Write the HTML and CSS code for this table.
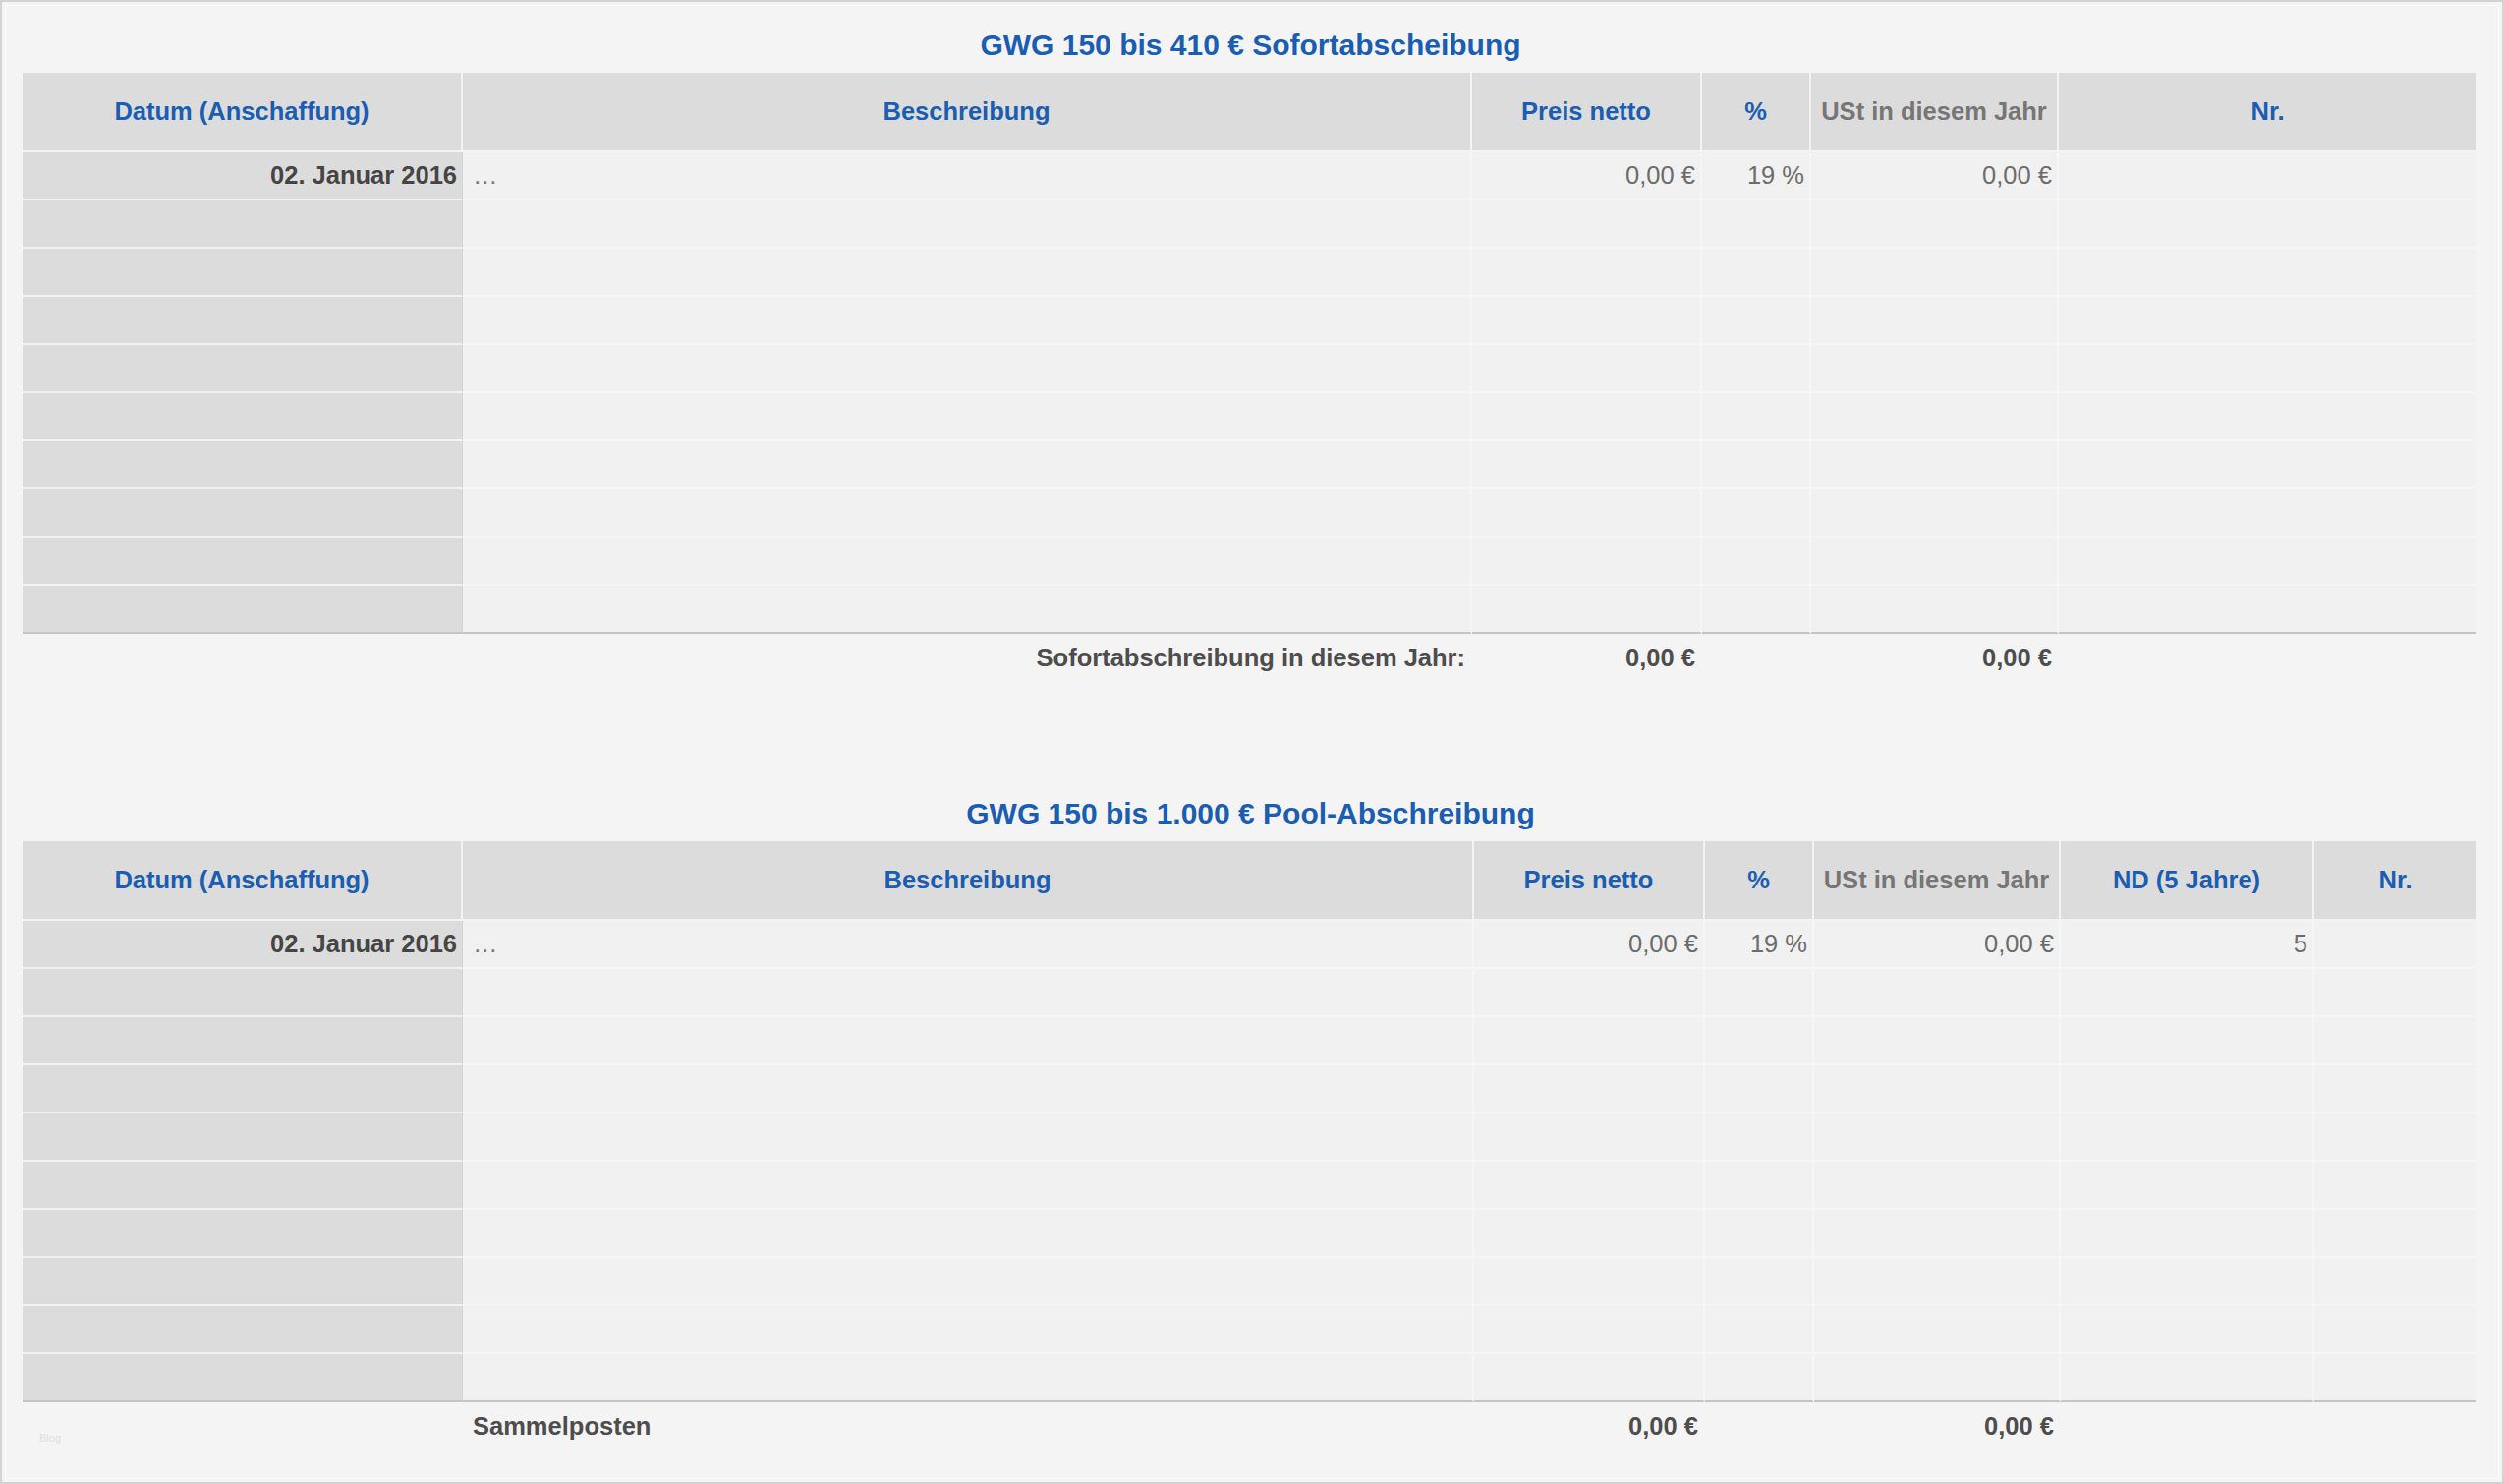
FILE: index.html
```html
<!DOCTYPE html>
<html lang="de">
<head>
<meta charset="utf-8">
<title>GWG</title>
<link rel="stylesheet" href="styles.css">
</head>
<body>
<div class="page">
  <section class="block first">
    <h1 class="title">GWG 150 bis 410 € Sofortabscheibung</h1>
    <div class="tbl t1">
      <div class="row head">
        <div class="blue">Datum (Anschaffung)</div>
        <div class="blue">Beschreibung</div>
        <div class="blue">Preis netto</div>
        <div class="blue">%</div>
        <div class="gray">USt in diesem Jahr</div>
        <div class="blue">Nr.</div>
      </div>
      <div class="rows">
        <div class="row"><div class="date">02. Januar 2016</div><div class="desc">…</div><div class="num">0,00 €</div><div class="num">19 %</div><div class="num">0,00 €</div><div></div></div>
        <div class="row"><div class="date"></div><div></div><div></div><div></div><div></div><div></div></div>
        <div class="row"><div class="date"></div><div></div><div></div><div></div><div></div><div></div></div>
        <div class="row"><div class="date"></div><div></div><div></div><div></div><div></div><div></div></div>
        <div class="row"><div class="date"></div><div></div><div></div><div></div><div></div><div></div></div>
        <div class="row"><div class="date"></div><div></div><div></div><div></div><div></div><div></div></div>
        <div class="row"><div class="date"></div><div></div><div></div><div></div><div></div><div></div></div>
        <div class="row"><div class="date"></div><div></div><div></div><div></div><div></div><div></div></div>
        <div class="row"><div class="date"></div><div></div><div></div><div></div><div></div><div></div></div>
        <div class="row"><div class="date"></div><div></div><div></div><div></div><div></div><div></div></div>
      </div>
      <div class="row foot">
        <div></div>
        <div class="right">Sofortabschreibung in diesem Jahr:</div>
        <div class="right">0,00 €</div>
        <div></div>
        <div class="right">0,00 €</div>
        <div></div>
      </div>
    </div>
  </section>

  <section class="block second">
    <h1 class="title">GWG 150 bis 1.000 € Pool-Abschreibung</h1>
    <div class="tbl t2">
      <div class="row head">
        <div class="blue">Datum (Anschaffung)</div>
        <div class="blue">Beschreibung</div>
        <div class="blue">Preis netto</div>
        <div class="blue">%</div>
        <div class="gray">USt in diesem Jahr</div>
        <div class="blue">ND (5 Jahre)</div>
        <div class="blue">Nr.</div>
      </div>
      <div class="rows">
        <div class="row"><div class="date">02. Januar 2016</div><div class="desc">…</div><div class="num">0,00 €</div><div class="num">19 %</div><div class="num">0,00 €</div><div class="num">5</div><div></div></div>
        <div class="row"><div class="date"></div><div></div><div></div><div></div><div></div><div></div><div></div></div>
        <div class="row"><div class="date"></div><div></div><div></div><div></div><div></div><div></div><div></div></div>
        <div class="row"><div class="date"></div><div></div><div></div><div></div><div></div><div></div><div></div></div>
        <div class="row"><div class="date"></div><div></div><div></div><div></div><div></div><div></div><div></div></div>
        <div class="row"><div class="date"></div><div></div><div></div><div></div><div></div><div></div><div></div></div>
        <div class="row"><div class="date"></div><div></div><div></div><div></div><div></div><div></div><div></div></div>
        <div class="row"><div class="date"></div><div></div><div></div><div></div><div></div><div></div><div></div></div>
        <div class="row"><div class="date"></div><div></div><div></div><div></div><div></div><div></div><div></div></div>
        <div class="row"><div class="date"></div><div></div><div></div><div></div><div></div><div></div><div></div></div>
      </div>
      <div class="row foot">
        <div class="mark">Blog</div>
        <div class="left">Sammelposten</div>
        <div class="right">0,00 €</div>
        <div></div>
        <div class="right">0,00 €</div>
        <div></div>
        <div></div>
      </div>
    </div>
  </section>
</div>
</body>
</html>
```

FILE: styles.css
```css
html, body {
  margin: 0;
  padding: 0;
  background: #f4f4f4;
}

.page {
  box-sizing: border-box;
  width: 2548px;
  height: 1510px;
  border: 2px solid #d3d3d3;
  box-shadow: inset 0 0 0 3px #f4f4f4, inset 0 0 0 4px #fcfcfc;
  background: #f4f4f4;
  padding: 24px 26px 0 21px;
  font-family: "Liberation Sans", Arial, sans-serif;
  font-size: 25.5px;
  color: #444;
}

.block.second {
  margin-top: 114px;
}

.title {
  margin: 0 0 8px 0;
  height: 40px;
  line-height: 40px;
  font-size: 30px;
  font-weight: bold;
  text-align: center;
  color: #1a5db1;
  padding-left: 2px;
}

.tbl {
  display: flex;
  flex-direction: column;
}

.t1 .row {
  display: grid;
  grid-template-columns: 448px 1027px 234px 111px 252px 425px;
}

.t2 .row {
  display: grid;
  grid-template-columns: 448px 1029px 235px 111px 251px 258px 165px;
}

.row > div {
  box-sizing: border-box;
  display: flex;
  align-items: center;
  white-space: nowrap;
  min-width: 0;
}

/* header */
.head > div {
  height: 81px;
  background: #dcdcdc;
  border-bottom: 2px solid #f3f3f3;
  border-right: 2px solid #f3f3f3;
  justify-content: center;
  font-weight: bold;
}

.head > div:last-child {
  border-right: 0;
}

.blue {
  color: #1a5db1;
}

.gray {
  color: #767676;
}

/* body rows */
.rows .row > div {
  height: 49px;
  background: #f1f1f1;
  border-bottom: 2px solid #f6f6f6;
  border-right: 2px solid #f6f6f6;
  padding: 0 5px 0 8px;
  justify-content: flex-end;
  color: #6c6c6c;
}

.rows .row > div:last-child {
  border-right: 0;
}

.rows .row > .date {
  background: #dcdcdc;
  border-bottom-color: #f2f2f2;
  border-right: 1px solid #d4d4d4;
  font-weight: bold;
  color: #454545;
  padding-right: 5px;
}

.rows .row > .desc {
  justify-content: flex-start;
  padding-left: 10px;
  color: #777;
}

.rows .row:last-child > div {
  border-bottom: 2px solid #c4c4c4;
}

/* footer */
.foot > div {
  height: 49px;
  padding: 0 7px;
  font-weight: bold;
  color: #4d4d4d;
}

.foot > .right {
  justify-content: flex-end;
}

.foot > .left {
  justify-content: flex-start;
  padding-left: 10px;
}

.foot > .mark {
  font-size: 11px;
  font-weight: normal;
  color: #dedede;
  padding: 22px 0 0 17px;
}
```
